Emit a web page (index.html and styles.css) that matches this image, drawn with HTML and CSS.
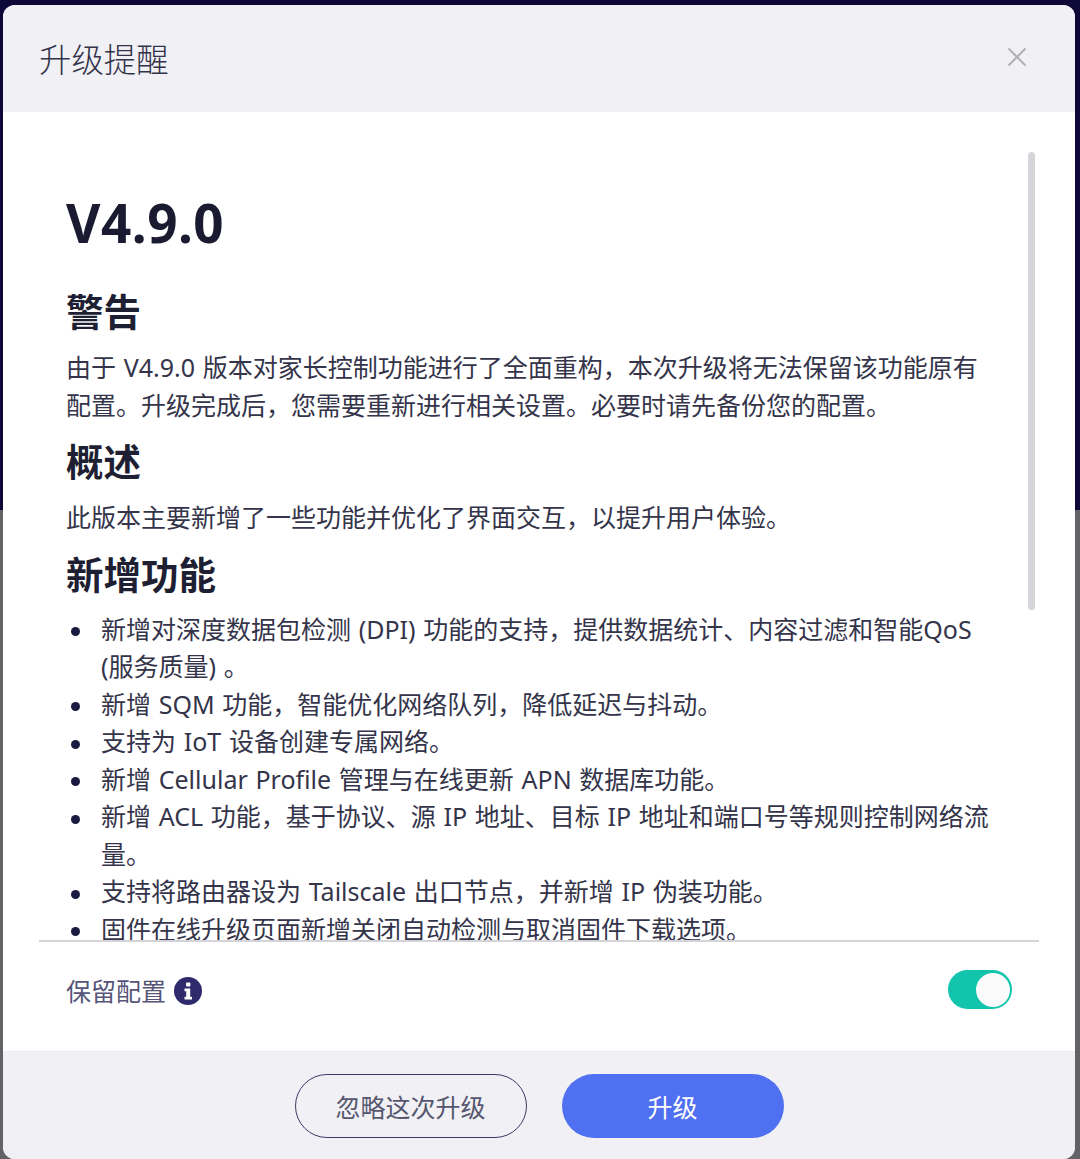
FILE: index.html
```html
<html>
<head>
    <meta charset="utf-8">
    <title>升级提醒</title>
    <link rel="stylesheet" href="styles.css">
</head>

<body>
    <div class="modal">
        <div class="modalHeader">
            <span class="modalTitle">升级提醒</span>
            <svg class="closeIcon" width="20" height="20" viewBox="0 0 20 20">
                <path d="M1.5 1.5L18.5 18.5M18.5 1.5L1.5 18.5" />
            </svg>
        </div>

        <div class="modalBody">
            <div class="notes">
                <h1>V4.9.0</h1>
                <h2>警告</h2>
                <p>由于 V4.9.0 版本对家长控制功能进行了全面重构，本次升级将无法保留该功能原有配置。升级完成后，您需要重新进行相关设置。必要时请先备份您的配置。</p>
                <h2>概述</h2>
                <p>此版本主要新增了一些功能并优化了界面交互，以提升用户体验。</p>
                <h2>新增功能</h2>
                <ul>
                    <li>新增对深度数据包检测 (DPI) 功能的支持，提供数据统计、内容过滤和智能QoS (服务质量) 。</li>
                    <li>新增 SQM 功能，智能优化网络队列，降低延迟与抖动。</li>
                    <li>支持为 IoT 设备创建专属网络。</li>
                    <li>新增 Cellular Profile 管理与在线更新 APN 数据库功能。</li>
                    <li>新增 ACL 功能，基于协议、源 IP 地址、目标 IP 地址和端口号等规则控制网络流量。</li>
                    <li>支持将路由器设为 Tailscale 出口节点，并新增 IP 伪装功能。</li>
                    <li>固件在线升级页面新增关闭自动检测与取消固件下载选项。</li>
                </ul>
            </div>
            <div class="scrollThumb"></div>

            <div class="keepRow">
                <div class="keepLabel">
                    <span class="keepText">保留配置</span>
                    <svg class="infoIcon" width="28" height="28" viewBox="0 0 28 28">
                        <circle cx="14" cy="14" r="14" fill="#2f2a6b" />
                        <rect x="12" y="5.5" width="4.4" height="4" rx="1" fill="#fff" />
                        <path d="M10.5 11.5H16.2V19.8H18V22.5H10.5V19.8H12.2V14.2H10.5Z" fill="#fff" />
                    </svg>
                </div>
                <div class="toggle"><div class="toggleKnob"></div></div>
            </div>
        </div>

        <div class="modalFooter">
            <button class="btn btnGhost">忽略这次升级</button>
            <button class="btn btnPrimary">升级</button>
        </div>
    </div>
</body>

</html>
```

FILE: styles.css
```css
html, body {
    height: 100%;
}
body {
    margin: 0;
    padding: 5px 5px 0 3px;
    box-sizing: border-box;
    overflow: hidden;
    background: linear-gradient(to bottom, #0e0838 0, #0e0838 510px, #636367 510px, #636367 100%);
    font-family: "Noto Sans", "Noto Sans CJK SC", sans-serif;
    color: #34344a;
}
.modal {
    height: 100%;
    display: flex;
    flex-direction: column;
    background-color: #ffffff;
    border-radius: 12px;
    overflow: hidden;
}
.modalHeader {
    flex: 0 0 107px;
    box-sizing: border-box;
    padding: 0 48px 2px 36px;
    display: flex;
    align-items: center;
    justify-content: space-between;
    background-color: #f0f0f5;
}
.modalTitle {
    font-size: 32.4px;
    font-weight: 300;
    color: #33334a;
}
.closeIcon {
    margin-bottom: 2px;
    fill: none;
    stroke: #b0b0b6;
    stroke-width: 2;
}
.modalBody {
    flex: 1;
    min-height: 0;
    position: relative;
    display: flex;
    flex-direction: column;
}
.notes {
    flex: 0 0 830px;
    box-sizing: border-box;
    margin: 0 36px;
    padding: 81px 45px 0 27px;
    overflow: hidden;
    border-bottom: 2px solid #d4d4d8;
    font-size: 25px;
    line-height: 37.5px;
    word-spacing: 1.2px;
}
h1 {
    margin: 0 0 31px 0;
    font-size: 53px;
    line-height: 60px;
    font-weight: 700;
    letter-spacing: 0.5px;
    color: #1a1a30;
}
h2 {
    margin: 0 0 9px 0;
    font-size: 37.5px;
    line-height: 56px;
    font-weight: 700;
    color: #1f1f33;
}
p {
    margin: 0 0 10px 0;
}
ul {
    margin: -1px 0 0 0;
    padding: 0 0 0 35px;
    list-style: none;
}
li::before {
    content: "";
    display: inline-block;
    width: 9px;
    height: 9px;
    margin-left: -30px;
    margin-right: 21px;
    vertical-align: middle;
    border-radius: 50%;
    background-color: #1a1a40;
}
.scrollThumb {
    position: absolute;
    top: 40px;
    right: 40px;
    width: 7px;
    height: 458px;
    border-radius: 4px;
    background-color: #d6d6da;
}
.keepRow {
    flex: 1;
    padding: 0 63px 12px 63px;
    display: flex;
    align-items: center;
    justify-content: space-between;
}
.keepLabel {
    display: flex;
    align-items: center;
    gap: 8px;
    font-size: 25px;
    color: #55557a;
}
.keepText {
    margin-bottom: 2px;
}
.toggle {
    width: 64px;
    height: 39px;
    margin-bottom: 2px;
    box-sizing: border-box;
    padding: 2.5px 2px;
    display: flex;
    justify-content: flex-end;
    border-radius: 20px;
    background-color: #12c4ac;
}
.toggleKnob {
    width: 34px;
    height: 34px;
    border-radius: 50%;
    background-color: #fbfbfb;
}
.modalFooter {
    flex: 0 0 108px;
    box-sizing: border-box;
    padding-top: 21.5px;
    display: flex;
    justify-content: center;
    align-items: flex-start;
    gap: 35px;
    background-color: #f0f0f5;
    border-top: 1px solid #ebebef;
}
.btn {
    height: 64px;
    border-radius: 32px;
    font-family: inherit;
    font-size: 25px;
}
.btnGhost {
    width: 232px;
    border: 1.5px solid #3d3963;
    background-color: transparent;
    color: #56566f;
}
.btnPrimary {
    width: 222px;
    border: none;
    background-color: #4f70f0;
    color: #ffffff;
}
```
